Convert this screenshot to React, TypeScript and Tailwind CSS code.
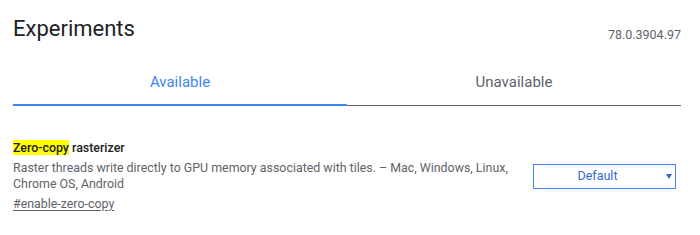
import React from 'react';

const TABS = [
  { label: 'Available', active: true },
  { label: 'Unavailable', active: false },
];

function Tab({ label, active }: { label: string; active: boolean }) {
  return (
    <button
      type="button"
      className={
        active
          ? 'flex-1 border-b-2 border-[#4285f4] pt-[12px] pb-[12px] text-[15px] leading-[20px] text-[#4285f4]'
          : 'flex-1 border-b border-[#5f6368] pt-[12px] pb-[13px] text-[15px] leading-[20px] text-[#5f6368]'
      }
    >
      {label}
    </button>
  );
}

export default function App() {
  return (
    <div className="h-[235px] w-[700px] overflow-hidden bg-white pl-[13px] pr-[19px] font-['Roboto','Liberation_Sans',sans-serif]">
      {/* header */}
      <div className="flex items-start justify-between">
        <h1 className="mt-[13px] text-[22px] leading-[32px] font-normal text-[#202124]">Experiments</h1>
        <span className="mt-[27px] text-[12.5px] leading-[16px] text-[#5f6368]">78.0.3904.97</span>
      </div>

      {/* tabs */}
      <div className="mt-[15px] flex">
        {TABS.map((t) => (
          <Tab key={t.label} label={t.label} active={t.active} />
        ))}
      </div>

      {/* experiment row */}
      <div className="mt-[32px] flex items-center justify-between">
        <div className="w-[505px]">
          <h2 className="text-[12.4px] leading-[20px] font-medium text-[#202124]">
            <span className="bg-[#ffff00]">Zero-copy</span> rasterizer
          </h2>
          <p className="mt-[2px] text-[12.4px] leading-[16px] text-[#5f6368]">
            Raster threads write directly to GPU memory associated with tiles. – Mac, Windows, Linux, Chrome OS, Android
          </p>
          <a className="mt-[2px] block text-[12.4px] leading-[20px] text-[#5f6368] underline underline-offset-2">
            #enable-zero-copy
          </a>
        </div>
        <div className="mr-[5px] flex h-[25px] w-[143px] items-center border border-[#4285f4] bg-white">
          <span className="flex-1 text-center text-[12.5px] text-[#3367d6]">Default</span>
          <svg viewBox="0 0 6 5" className="ml-[5px] mr-[3px] h-[5px] w-[6px]" fill="#3367d6">
            <path d="M0 0 H6 L3 5 Z" />
          </svg>
        </div>
      </div>
    </div>
  );
}
